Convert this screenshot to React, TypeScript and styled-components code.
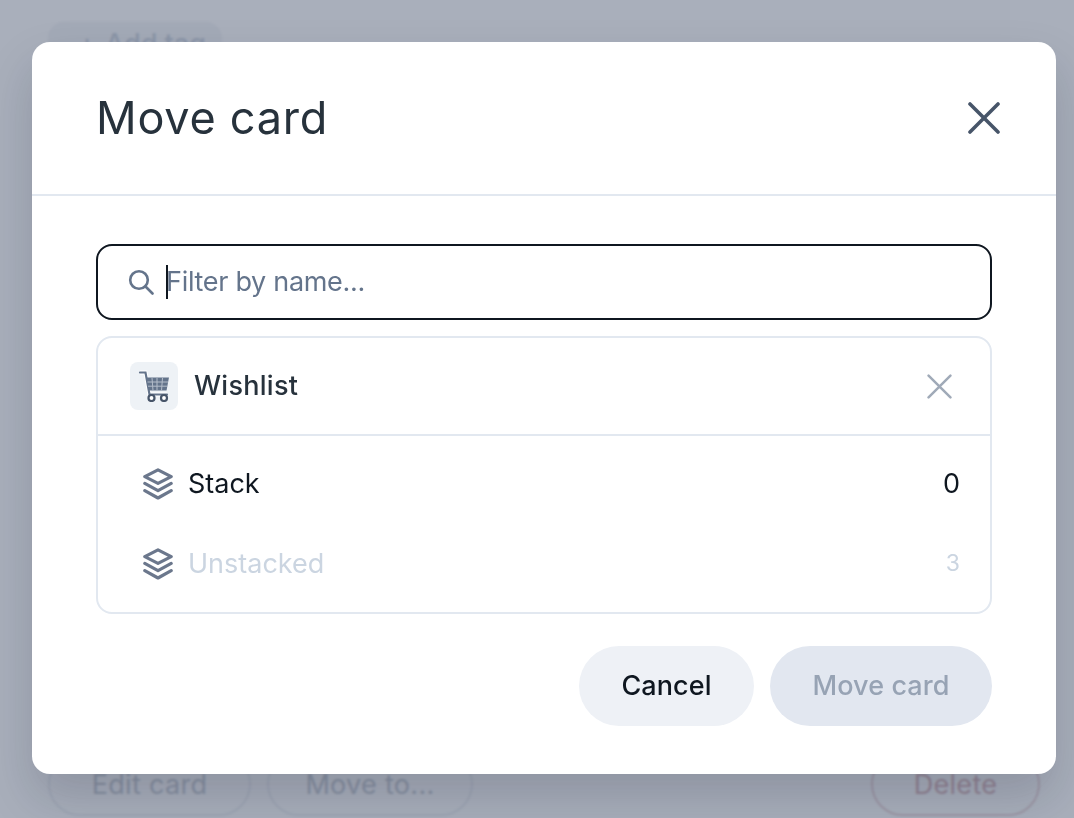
import styled, { createGlobalStyle } from "styled-components";

const GlobalStyle = createGlobalStyle`
  html, body {
    margin: 0;
    padding: 0;
    height: 100%;
    overflow: hidden;
    background: #fff;
  }
  * { box-sizing: border-box; }
  body {
    font-family: "Inter", "Noto Sans", "Liberation Sans", sans-serif;
  }
`;

const Page = styled.div`
  height: 100vh;
  display: flex;
  flex-direction: column;
  justify-content: space-between;
  padding: 22px 34px 2px 48px;
`;

const AddTag = styled.button`
  align-self: flex-start;
  display: flex;
  align-items: center;
  gap: 9px;
  width: 174px;
  height: 42px;
  padding: 0 30px;
  border: 0;
  border-radius: 16px;
  background: #f6f7f9;
  color: #d0d7e0;
  font: 500 27px "Inter", sans-serif;
  white-space: nowrap;
`;

const PageActions = styled.div`
  display: flex;
  gap: 16px;
`;

const GhostButton = styled.button<{ $danger?: boolean; $w: number }>`
  width: ${(p) => p.$w}px;
  height: 64px;
  padding: 0;
  border-radius: 32px;
  background: transparent;
  border: 2px solid ${(p) => (p.$danger ? "#ecd9dc" : "#eff1f4")};
  color: ${(p) => (p.$danger ? "#dcbcc1" : "#ccd1d8")};
  font: 400 27px "Inter", sans-serif;
  letter-spacing: 0.3px;
  margin-left: ${(p) => (p.$danger ? "auto" : "0")};
`;

const Overlay = styled.div`
  position: absolute;
  inset: 0;
  display: flex;
  padding: 42px 18px 44px 32px;
  background: rgba(17, 33, 67, 0.36);
  backdrop-filter: blur(1px);
`;

const Modal = styled.div`
  flex: 1;
  display: flex;
  flex-direction: column;
  background: #fff;
  border-radius: 18px;
  box-shadow: 0 24px 48px rgba(15, 23, 42, 0.18);
`;

const ModalHeader = styled.header`
  height: 154px;
  flex: none;
  display: flex;
  align-items: center;
  justify-content: space-between;
  padding: 0 56px 0 64px;
  border-bottom: 2px solid #e2e8f0;
`;

const Title = styled.h2`
  margin: -2px 0 0;
  font-size: 45px;
  font-weight: 400;
  letter-spacing: 0.75px;
  color: #27323c;
`;

const IconButton = styled.button`
  display: flex;
  padding: 0;
  border: 0;
  background: none;
`;

const ModalBody = styled.div`
  flex: 1;
  display: flex;
  flex-direction: column;
  padding: 48px 64px;
`;

const SearchBox = styled.label`
  height: 76px;
  flex: none;
  display: flex;
  align-items: center;
  padding-left: 30px;
  border: 2px solid #0f1720;
  border-radius: 16px;
`;

const Caret = styled.span`
  width: 2px;
  height: 34px;
  margin: 0 -2px 0 12px;
  background: #0f1720;
`;

const SearchInput = styled.input`
  flex: 1;
  min-width: 0;
  padding: 0 0 2px;
  border: 0;
  outline: 0;
  background: none;
  font: 400 27px "Inter", sans-serif;
  letter-spacing: -0.3px;
  &::placeholder {
    color: #64748b;
    opacity: 1;
  }
`;

const StackList = styled.div`
  flex: none;
  height: 278px;
  margin-top: 16px;
  border: 2px solid #e2e8f0;
  border-radius: 16px;
`;

const BoardRow = styled.div`
  height: 98px;
  display: flex;
  align-items: center;
  gap: 16px;
  padding: 0 38px 0 32px;
  border-bottom: 2px solid #e2e8f0;
`;

const BoardIcon = styled.div`
  width: 48px;
  height: 48px;
  display: flex;
  align-items: center;
  justify-content: center;
  border-radius: 8px;
  background: #eef2f6;
`;

const BoardName = styled.span`
  flex: 1;
  padding-bottom: 2px;
  font-size: 27px;
  font-weight: 500;
  letter-spacing: 0.27px;
  color: #27323c;
`;

const Rows = styled.div`
  padding: 8px 0;
`;

const StackRow = styled.div<{ $disabled?: boolean }>`
  height: 80px;
  display: flex;
  align-items: center;
  gap: 15px;
  padding: 0 30px 0 45px;
  font-size: 27px;
  color: ${(p) => (p.$disabled ? "#cbd5e1" : "#0f1720")};
`;

const StackName = styled.span`
  flex: 1;
  padding-bottom: 2px;
`;

const Count = styled.span<{ $small?: boolean }>`
  padding-bottom: 2px;
  font-size: ${(p) => (p.$small ? "23px" : "27px")};
`;

const ModalFooter = styled.div`
  margin-top: auto;
  display: flex;
  justify-content: flex-end;
  gap: 16px;
`;

const Pill = styled.button<{ $primary?: boolean; $w: number }>`
  width: ${(p) => p.$w}px;
  height: 80px;
  padding: 0 0 2px;
  border: 0;
  border-radius: 40px;
  background: ${(p) => (p.$primary ? "#e2e7f0" : "#eef1f6")};
  color: ${(p) => (p.$primary ? "#97a3b4" : "#0f1720")};
  font: 500 27px "Inter", sans-serif;
  letter-spacing: 0.1px;
`;

const CloseIcon = ({ size, color, width }: { size: number; color: string; width: number }) => (
  <svg width={size} height={size} viewBox="0 0 32 32" fill="none" stroke={color} strokeWidth={width} strokeLinecap="round">
    <path d="M2 2 30 30M30 2 2 30" />
  </svg>
);

const SearchIcon = () => (
  <svg width="26" height="26" viewBox="0 0 26 26" fill="none" stroke="#64748b" strokeWidth="2.6" strokeLinecap="round">
    <circle cx="11" cy="11" r="8.8" />
    <path d="m17.5 17.5 7 7" />
  </svg>
);

const LayersIcon = () => (
  <svg width="30" height="32" viewBox="0 0 30 32" fill="none" stroke="#6b778c" strokeWidth="3.2" strokeLinecap="round" strokeLinejoin="round">
    <path d="M15 1.8 28.2 8.6 15 15.4 1.8 8.6Z" />
    <path d="M1.8 15.4 15 22.6 28.2 15.4" />
    <path d="M1.8 22.6 15 30 28.2 22.6" />
  </svg>
);

const CartIcon = () => (
  <svg width="32" height="32" viewBox="0 0 32 32" fill="none">
    <path d="M2 2.5H7.5L11.5 24.5H29" stroke="#fff" strokeWidth="4" />
    <path d="M2 2.5H7.5L11.5 24.5H29" stroke="#64748b" strokeWidth="2.2" strokeLinecap="round" />
    <path d="M8.5 7.5H31L28.5 20.5H11Z" fill="#64748b" />
    <path d="M9.5 12H30M10 16.2H29M14 8 15 20.5M19 8V20.5M24.5 8 23.5 20.5" stroke="#b4bdca" strokeWidth="1" />
    <circle cx="13.5" cy="28" r="3" fill="#fff" stroke="#475569" strokeWidth="2.2" />
    <circle cx="26" cy="28" r="3" fill="#fff" stroke="#475569" strokeWidth="2.2" />
  </svg>
);

const App = () => {
  return (
    <>
      <GlobalStyle />
      <Page>
        <AddTag>
          <span>+</span>
          <span>Add tag</span>
        </AddTag>
        <PageActions>
          <GhostButton $w={203}>Edit card</GhostButton>
          <GhostButton $w={206}>Move to...</GhostButton>
          <GhostButton $w={169} $danger>Delete</GhostButton>
        </PageActions>
      </Page>
      <Overlay>
        <Modal>
          <ModalHeader>
            <Title>Move card</Title>
            <IconButton aria-label="Close">
              <CloseIcon size={32} color="#475569" width={3.6} />
            </IconButton>
          </ModalHeader>
          <ModalBody>
            <SearchBox>
              <SearchIcon />
              <Caret />
              <SearchInput placeholder="Filter by name..." />
            </SearchBox>
            <StackList>
              <BoardRow>
                <BoardIcon>
                  <CartIcon />
                </BoardIcon>
                <BoardName>Wishlist</BoardName>
                <IconButton aria-label="Clear">
                  <CloseIcon size={25} color="#a0aab8" width={3.2} />
                </IconButton>
              </BoardRow>
              <Rows>
                <StackRow>
                  <LayersIcon />
                  <StackName>Stack</StackName>
                  <Count>0</Count>
                </StackRow>
                <StackRow $disabled>
                  <LayersIcon />
                  <StackName>Unstacked</StackName>
                  <Count $small>3</Count>
                </StackRow>
              </Rows>
            </StackList>
            <ModalFooter>
              <Pill $w={175}>Cancel</Pill>
              <Pill $w={222} $primary>Move card</Pill>
            </ModalFooter>
          </ModalBody>
        </Modal>
      </Overlay>
    </>
  );
};

export default App;
